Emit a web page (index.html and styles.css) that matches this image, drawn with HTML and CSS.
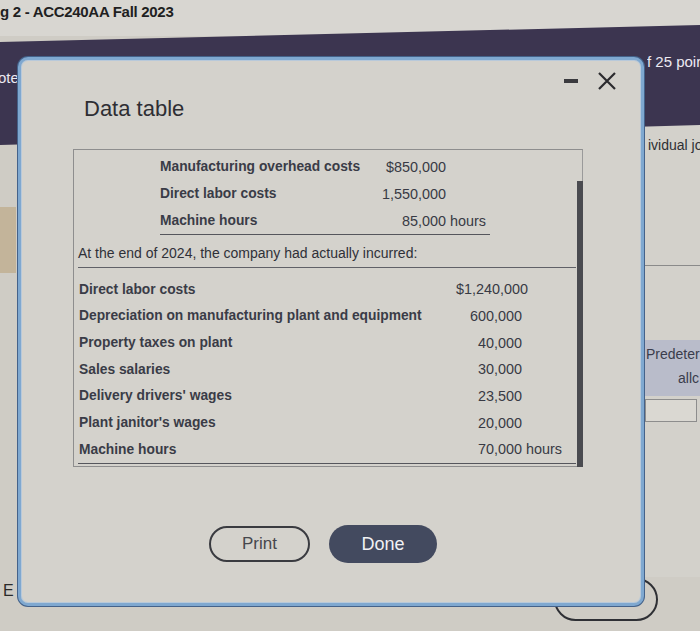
FILE: index.html
```html
<!DOCTYPE html>
<html>
<head>
<meta charset="utf-8">
<link rel="stylesheet" href="styles.css">
</head>
<body>
<div class="page">
  <div class="topbar">g 2 - ACC240AA Fall 2023</div>
  <div class="band">
    <span class="band-left">ote</span>
    <span class="band-right">f 25 poir</span>
  </div>
  <div class="body">
    <div class="col-left"><div class="tan"></div></div>
    <div class="col-mid"></div>
    <div class="col-right">
      <div class="rtext">ividual jo</div>
      <div class="rline"></div>
      <div class="pred">
        <div class="pred1">Predeter</div>
        <div class="pred2">allc</div>
      </div>
      <div class="rinput"></div>
    </div>
  </div>
  <div class="footer">
    <span class="eletter">E</span>
    <span class="ghostbtn"></span>
  </div>

  <div class="modal">
    <div class="controls">
      <span class="minus"></span>
      <svg class="close" width="20" height="20" viewBox="0 0 20 20"><path d="M2 2 L18 18 M18 2 L2 18" stroke="#2b2b2e" stroke-width="2.2" fill="none"/></svg>
    </div>
    <h1 class="title">Data table</h1>
    <div class="frame">
      <div class="thumb"></div>
      <div class="budget">
        <div class="lbl">Manufacturing overhead costs</div><div class="num">$850,000</div><div class="unit"></div>
        <div class="lbl">Direct labor costs</div><div class="num">1,550,000</div><div class="unit"></div>
        <div class="lbl">Machine hours</div><div class="num">85,000</div><div class="unit">&nbsp;hours</div>
      </div>
      <div class="intro">At the end of 2024, the company had actually incurred:</div>
      <div class="actual">
        <div class="lbl">Direct labor costs</div><div class="num">$1,240,000</div><div class="unit"></div>
        <div class="lbl">Depreciation on manufacturing plant and equipment</div><div class="num">600,000</div><div class="unit"></div>
        <div class="lbl">Property taxes on plant</div><div class="num">40,000</div><div class="unit"></div>
        <div class="lbl">Sales salaries</div><div class="num">30,000</div><div class="unit"></div>
        <div class="lbl">Delivery drivers' wages</div><div class="num">23,500</div><div class="unit"></div>
        <div class="lbl">Plant janitor's wages</div><div class="num">20,000</div><div class="unit"></div>
        <div class="lbl">Machine hours</div><div class="num">70,000</div><div class="unit">&nbsp;hours</div>
      </div>
    </div>
    <div class="buttons">
      <button class="btn print">Print</button>
      <button class="btn done">Done</button>
    </div>
  </div>
</div>
</body>
</html>
```
FILE: styles.css
```css
* { box-sizing: border-box; }
html, body { margin: 0; padding: 0; }
body {
  width: 700px;
  height: 631px;
  overflow: hidden;
  background: #cfccc5;
  font-family: "Liberation Sans", Arial, sans-serif;
}
.page {
  position: relative;
  width: 700px;
  height: 631px;
  overflow: hidden;
}
.topbar {
  height: 36px;
  background: #d8d6d1;
  font-size: 15px;
  font-weight: bold;
  color: #1f1f22;
  padding-top: 3px;
  letter-spacing: -0.3px;
}
.band {
  margin-top: -11px;
  height: 120px;
  background: #3c3550;
  clip-path: polygon(0 17px, 100% 0, 100% 100px, 0 120px);
  display: flex;
  justify-content: space-between;
  color: #ece9f2;
  font-size: 15px;
}
.band-left { margin-top: 44px; margin-left: -2px; }
.band-right { margin-top: 28px; width: 53px; overflow: hidden; white-space: nowrap; }
.body {
  display: grid;
  grid-template-columns: 18px 1fr 55px;
  height: 432px;
}
.tan {
  margin-top: 62px;
  height: 66px;
  width: 16px;
  background: #c3b49a;
}
.col-right {
  background: #d3d1cb;
  margin-top: -20px;
  overflow: hidden;
}
.rtext {
  margin-top: 10px;
  padding-left: 3px;
  font-size: 14px;
  line-height: 20px;
  color: #2f2f33;
  white-space: nowrap;
}
.rline {
  margin-top: 110px;
  border-top: 1px solid #8a8a8a;
}
.pred {
  margin-top: 74px;
  height: 56px;
  background: #b9bcca;
  color: #3a3d4c;
  font-size: 14px;
  white-space: nowrap;
}
.pred1 { padding-top: 6px; padding-left: 1px; }
.pred2 { padding-top: 8px; padding-left: 33px; }
.rinput {
  margin-top: 3px;
  width: 52px;
  height: 23px;
  border: 1px solid #8d8d8d;
  background: #dad8d2;
}
.footer {
  display: flex;
  justify-content: space-between;
  align-items: flex-start;
}
.eletter {
  margin-top: 5px;
  margin-left: 3px;
  font-size: 16px;
  color: #2a2a2a;
}
.ghostbtn {
  margin-top: 1px;
  margin-right: 42px;
  width: 104px;
  height: 43px;
  border: 2px solid #2f3035;
  border-radius: 22px;
}

.modal {
  position: absolute;
  z-index: 10;
  left: 18px;
  top: 57px;
  width: 626px;
  height: 549px;
  background: #d4d2cc;
  border: 3px solid #7fa8d0;
  border-radius: 10px;
  box-shadow: 0 0 0 1px #44628a, inset 0 0 0 1px #b8c9da;
}
.controls {
  position: absolute;
  top: 11px;
  right: 24px;
  display: flex;
  align-items: center;
  gap: 19px;
}
.minus {
  width: 14px;
  height: 4px;
  background: #3a3a3e;
}
.close { display: block; }
.title {
  margin: 37px 0 0 63px;
  font-size: 22px;
  font-weight: normal;
  line-height: 24px;
  color: #2e2e33;
}
.frame {
  position: relative;
  margin: 28px 0 0 52px;
  width: 510px;
  height: 318px;
  border: 1px solid #8e8e8e;
  border-right-color: #9a9a9a;
  padding: 3px 6px 0 4px;
}
.thumb {
  position: absolute;
  right: -1px;
  top: 31px;
  width: 6px;
  height: 286px;
  background: #4a4b50;
}
.budget {
  display: grid;
  grid-template-columns: 200px 86px 42px;
  grid-auto-rows: 27px;
  align-items: center;
  margin-left: 82px;
  width: 330px;
  border-bottom: 1.5px solid #55565c;
}
.lbl {
  font-size: 13.8px;
  font-weight: bold;
  color: #3a3c47;
  white-space: nowrap;
}
.num {
  font-size: 14.4px;
  color: #383a44;
  text-align: right;
  white-space: nowrap;
}
.unit {
  font-size: 14.4px;
  color: #383a44;
  white-space: nowrap;
}
.intro {
  margin-top: 8px;
  font-size: 14px;
  line-height: 20px;
  color: #2f3038;
  padding-bottom: 4px;
  border-bottom: 1.5px solid #606167;
}
.actual {
  margin-top: 8px;
  display: grid;
  grid-template-columns: 378px 66px 51px;
  grid-auto-rows: 26.67px;
  align-items: center;
  border-bottom: 1.5px solid #55565c;
}
.actual .lbl { padding-left: 1px; }
.buttons {
  display: flex;
  gap: 19px;
  margin: 58px 0 0 188px;
  align-items: center;
}
.btn {
  font-family: "Liberation Sans", Arial, sans-serif;
  border-radius: 19px;
  cursor: pointer;
}
.print {
  width: 101px;
  height: 36px;
  background: transparent;
  border: 2px solid #3a3b40;
  color: #46474d;
  font-size: 17px;
}
.done {
  width: 108px;
  height: 38px;
  background: #434a5f;
  border: none;
  color: #f1f1f4;
  font-size: 18px;
}
```
